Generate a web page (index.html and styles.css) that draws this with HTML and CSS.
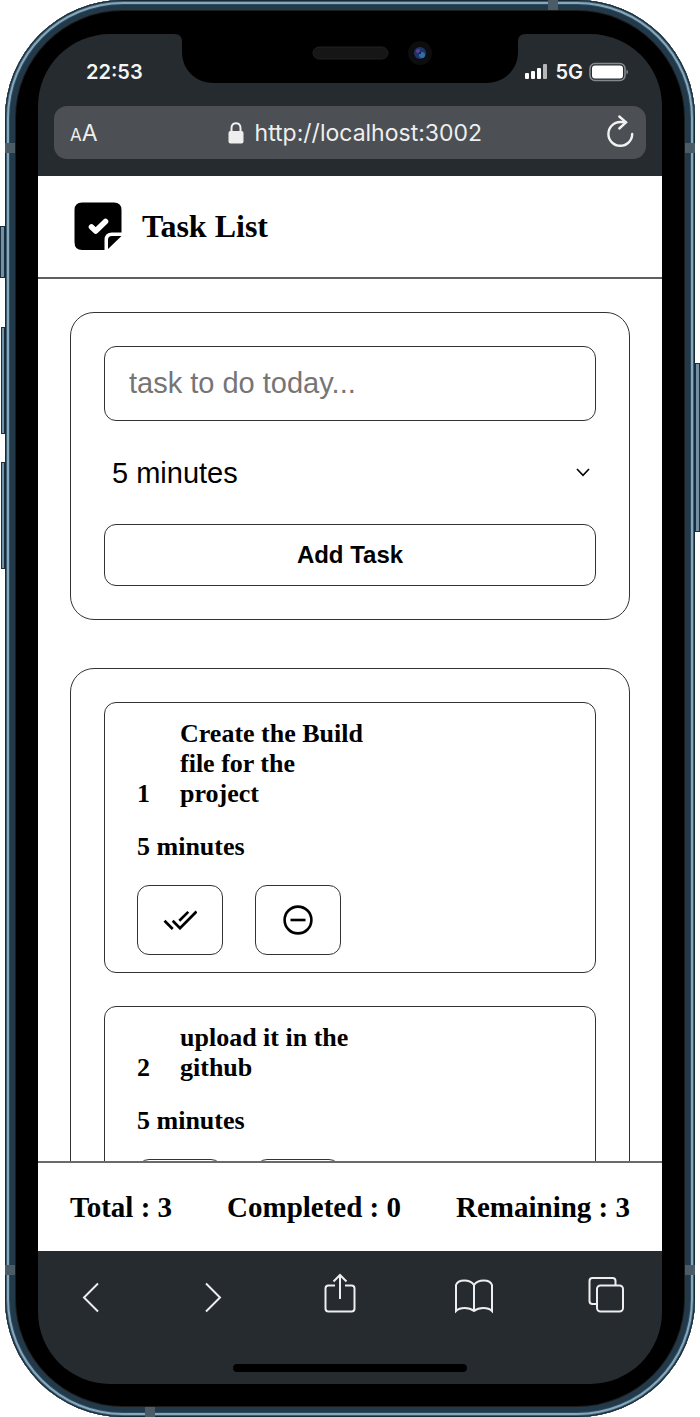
FILE: index.html
```html
<!DOCTYPE html>
<html lang="en">
<head>
<meta charset="utf-8">
<meta name="viewport" content="width=device-width, initial-scale=1">
<title>Task List</title>
<link rel="stylesheet" href="styles.css">
</head>
<body>
<div class="phone">
  <span class="key key-mute"></span>
  <span class="key key-up"></span>
  <span class="key key-down"></span>
  <span class="key key-power"></span>
  <span class="band band-top"></span>
  <span class="band band-bottom"></span>
  <span class="band band-side band-left-high"></span>
  <span class="band band-side band-left-low"></span>
  <span class="band band-side band-right-high"></span>
  <span class="band band-side band-right-low"></span>

  <div class="screen">
    <svg class="notch" viewBox="0 0 352 50" aria-hidden="true">
      <path d="M0 0C6 0 8 3 8 8V18C8 36 22 49 40 49H312C330 49 344 36 344 18V8C344 3 346 0 352 0Z" fill="#000"/>
      <rect x="139" y="13" width="75" height="12" rx="6" fill="#161616" stroke="#202020"/>
      <circle cx="246" cy="19" r="12" fill="#0d0d0f"/>
      <circle cx="246" cy="19" r="6" fill="#1d3566"/>
      <circle cx="244" cy="17" r="2" fill="#5a3f96"/>
      <circle cx="248" cy="21" r="3" fill="#2f6fa8"/>
      <circle cx="246" cy="19" r="1" fill="#0c1330"/>
    </svg>

    <div class="status-bar">
      <span class="status-text">22:53</span>
      <div class="status-right">
        <svg width="24" height="16" viewBox="0 0 24 16" aria-hidden="true">
          <rect x="0" y="9" width="4" height="6" rx="1" fill="#fff"/>
          <rect x="6" y="7" width="4" height="8" rx="1" fill="#fff"/>
          <rect x="12" y="4" width="4" height="11" rx="1" fill="#fff"/>
          <rect x="18" y="0" width="4" height="15" rx="1" fill="#b4b6b8"/>
        </svg>
        <span class="status-text">5G</span>
        <svg width="40" height="20" viewBox="0 0 40 20" aria-hidden="true">
          <rect x="1" y="1.5" width="35" height="17" rx="5" fill="none" stroke="#85898c" stroke-width="1.6"/>
          <rect x="3" y="3.5" width="31" height="13" rx="3" fill="#fff"/>
          <path d="M37.5 7.5C39.6 8.6 39.6 11.4 37.5 12.5Z" fill="#85898c"/>
        </svg>
      </div>
    </div>

    <div class="url-bar">
      <button class="bar-button text-size" type="button" aria-label="Text size"><span class="small-a">A</span>A</button>
      <div class="address">
        <svg width="16" height="22" viewBox="0 0 16 22" aria-hidden="true">
          <rect x="0.5" y="9" width="15" height="12.5" rx="2" fill="#eee"/>
          <path d="M3.5 10V6C3.5 -0.5 12.5 -0.5 12.5 6V10" fill="none" stroke="#eee" stroke-width="2"/>
        </svg>
        <span>http://localhost:3002</span>
      </div>
      <button class="bar-button" type="button" aria-label="Reload">
        <svg class="reload" width="28" height="34" viewBox="0 0 28 34" aria-hidden="true">
          <path d="M19.500 6.300C17 6 15.500 6 14.300 6A11.900 11.900 0 1 0 26.200 17.900" fill="none" stroke="#f2f2f2" stroke-width="2.400" stroke-linecap="round"/>
          <path d="M13.300 0.500L20 6.300L13.300 12.500" fill="none" stroke="#f2f2f2" stroke-width="2.400" stroke-linecap="round"/>
        </svg>
      </button>
    </div>

    <div class="app">
      <header class="app-header">
        <svg width="48" height="48" viewBox="0 0 48 48" aria-hidden="true">
          <path d="M8 0.500H40Q47.500 0.500 47.500 8V30.500H38Q30.500 30.500 30.500 38V48H8Q0.500 48 0.500 40V8Q0.500 0.500 8 0.500Z" fill="#000"/>
          <path d="M34 47V38Q34 34 38 34H47.500Z" fill="#000"/>
          <path d="M17.500 25L21.700 29L31.500 19.500" fill="none" stroke="#fff" stroke-width="5.600" stroke-linecap="round" stroke-linejoin="round"/>
        </svg>
        <h1 class="app-title">Task List</h1>
      </header>

      <main class="content">
        <form class="panel task-form">
          <input class="task-input" type="text" placeholder="task to do today..." aria-label="Task">
          <div class="select-wrap">
            <select class="time-select" aria-label="Duration">
              <option>5 minutes</option>
              <option>10 minutes</option>
              <option>15 minutes</option>
            </select>
            <svg class="chevron" width="14" height="9" viewBox="0 0 14 9" aria-hidden="true"><path d="M1 1L7 7.300L13 1" fill="none" stroke="#000" stroke-width="1.600"/></svg>
          </div>
          <button class="add-button" type="button">Add Task</button>
        </form>

        <section class="panel task-list">
          <article class="task">
            <div class="task-name"><span>1</span><span class="task-text">Create the Build file for the project</span></div>
            <div class="task-time">5 minutes</div>
            <div class="task-actions">
              <button class="action" type="button" aria-label="Complete task">
                <svg width="34" height="20" viewBox="0 0 34 20" aria-hidden="true"><path d="M1.500 10.800L9.700 19M9.700 10.800L17 18.200L33.500 1.500M16.300 10.800L25.300 1.900" fill="none" stroke="#000" stroke-width="2.700"/></svg>
              </button>
              <button class="action" type="button" aria-label="Remove task">
                <svg width="30" height="30" viewBox="0 0 30 30" aria-hidden="true"><circle cx="15" cy="15" r="13.400" fill="none" stroke="#000" stroke-width="2.600"/><path d="M7.500 15H22.500" stroke="#000" stroke-width="2.600"/></svg>
              </button>
            </div>
          </article>
          <article class="task">
            <div class="task-name"><span>2</span><span class="task-text">upload it in the github</span></div>
            <div class="task-time">5 minutes</div>
            <div class="task-actions">
              <button class="action" type="button" aria-label="Complete task"></button>
              <button class="action" type="button" aria-label="Remove task"></button>
            </div>
          </article>
        </section>
      </main>

      <footer class="totals">
        <span>Total : 3</span>
        <span>Completed : 0</span>
        <span>Remaining : 3</span>
      </footer>
    </div>

    <div class="browser-bar">
      <nav class="tools" aria-label="Browser">
        <button class="bar-button" type="button" aria-label="Back">
          <svg width="18" height="40" viewBox="0 0 18 40"><path d="M16 7.500L2 21.500L16 35.500" /></svg>
        </button>
        <button class="bar-button" type="button" aria-label="Forward">
          <svg width="18" height="40" viewBox="0 0 18 40"><path d="M2 7.500L16 21.500L2 35.500" /></svg>
        </button>
        <button class="bar-button" type="button" aria-label="Share">
          <svg width="32" height="40" viewBox="0 0 32 40"><path d="M11 9.500H4.500Q1.500 9.500 1.500 12.500V32.500Q1.500 35.500 4.500 35.500H27.500Q30.500 35.500 30.500 32.500V12.500Q30.500 9.500 27.500 9.500H21M16 23V-1M9.500 5.500L16 -1L22.500 5.500"/></svg>
        </button>
        <button class="bar-button" type="button" aria-label="Bookmarks">
          <svg width="40" height="40" viewBox="0 0 40 40"><path d="M20 35V9C16 3 4 3 2 9V35C6 31 15 31 20 35C25 31 34 31 38 35V9C36 3 24 3 20 9"/></svg>
        </button>
        <button class="bar-button" type="button" aria-label="Tabs">
          <svg width="36" height="40" viewBox="0 0 36 40"><path d="M9 28H4.500Q1.500 28 1.500 25V5Q1.500 2 4.500 2H24.500Q27.500 2 27.500 5V9"/><rect x="9" y="9.500" width="26" height="26" rx="3.500"/></svg>
        </button>
      </nav>
      <span class="home-indicator"></span>
    </div>
  </div>
</div>
</body>
</html>
```

FILE: styles.css
```css
* {
  box-sizing: border-box;
}

body {
  margin: 0;
  background: #fff;
  color: #000;
  font-family: "Liberation Serif", "Times New Roman", serif;
}

button,
input,
select {
  margin: 0;
  font-family: "Liberation Sans", Arial, sans-serif;
}

/* Device */
.phone {
  position: relative;
  height: 100vh;
  min-height: 900px;
  margin: 0 5px;
  padding: 34px 33px 33px;
  border-radius: 118px;
  background: #000;
  box-shadow:
    inset 0 0 0 1px #1a2a35,
    inset 0 0 0 2px #3e5b6f,
    inset 0 0 0 4px #86a8bd,
    inset 0 0 0 5px #2f4b5f,
    inset 0 0 0 10px #22394a,
    inset 0 0 0 11px #1e1c1b;
}

.key {
  position: absolute;
  width: 5px;
  border: 1px solid #1c2f3d;
  background: #6f90a5;
}

.key-mute { left: -5px; top: 226px; height: 52px; }
.key-up { left: -4px; top: 327px; height: 107px; width: 4px; }
.key-down { left: -4px; top: 462px; height: 107px; width: 4px; }
.key-power { right: -5px; top: 363px; height: 169px; }

.band {
  position: absolute;
  width: 10px;
  height: 10px;
  background: #4b5c67;
}

.band-top { top: 0; right: 137px; }
.band-bottom { bottom: 0; left: 140px; }
.band-left-high { left: 0; top: 143px; }
.band-left-low { left: 0; bottom: 142px; }
.band-right-high { right: 0; top: 143px; }
.band-right-low { right: 0; bottom: 142px; }

.screen {
  position: relative;
  display: flex;
  flex-direction: column;
  height: 100%;
  border-radius: 72px;
  overflow: hidden;
  background: #262b2f;
  font-weight: 700;
}

.notch {
  position: absolute;
  top: 0;
  left: 50%;
  width: 352px;
  height: 50px;
  transform: translateX(-50%);
}

/* Browser chrome */
.status-bar {
  display: flex;
  align-items: center;
  justify-content: space-between;
  height: 72px;
  padding: 4px 33px 0 48px;
  color: #f5f5f5;
}

.status-text {
  font: 600 20px/24px Inter, sans-serif;
}

.status-right {
  display: flex;
  align-items: center;
  gap: 6px;
}

.url-bar {
  display: flex;
  align-items: center;
  justify-content: space-between;
  height: 53px;
  margin: 0 16px 17px;
  padding: 0 12px 0 16px;
  border-radius: 13px;
  background: #4c4f54;
  color: #eee;
}

.address {
  display: flex;
  align-items: center;
  gap: 11px;
  padding-left: 6px;
  font: 400 23px/28px Inter, sans-serif;
}

.bar-button {
  display: flex;
  align-items: center;
  padding: 0;
  border: 0;
  background: none;
  color: #eee;
}

.text-size {
  align-items: baseline;
  padding-top: 3px;
  font: 400 23px/28px Inter, sans-serif;
}

.small-a {
  font-size: 17px;
}

.reload {
  overflow: visible;
}

/* App */
.app {
  display: flex;
  flex: 1;
  flex-direction: column;
  min-height: 0;
  background: #fff;
}

.app-header {
  display: flex;
  align-items: center;
  gap: 20px;
  padding: 26px 36px 27px;
  border-bottom: 2px solid #5f5f5f;
}

.app-title {
  margin: 0;
  font-size: 32px;
  line-height: 48px;
}

.content {
  display: flex;
  flex: 1;
  flex-direction: column;
  gap: 48px;
  min-height: 0;
  padding: 33px 32px 0;
  overflow: hidden;
}

.panel {
  display: flex;
  flex: none;
  flex-direction: column;
  gap: 32px;
  padding: 33px;
  border: 1px solid #333;
  border-radius: 24px;
}

.task-input {
  width: 100%;
  height: 75px;
  padding: 0 24px;
  border: 1px solid #333;
  border-radius: 12px;
  background: #fff;
  font-size: 29px;
}

.task-input::placeholder {
  color: #757575;
}

.select-wrap {
  position: relative;
}

.time-select {
  display: block;
  width: 100%;
  height: 39px;
  padding: 0 8px;
  border: 0;
  appearance: none;
  background: none;
  color: #000;
  font-size: 29px;
}

.chevron {
  position: absolute;
  top: 15px;
  right: 6px;
  pointer-events: none;
}

.add-button {
  height: 62px;
  border: 1px solid #333;
  border-radius: 12px;
  background: #fff;
  color: #000;
  font-size: 24px;
  font-weight: 700;
}

.task-list {
  gap: 33px;
}

.task {
  padding: 16px 32px 17px;
  border: 1px solid #333;
  border-radius: 12px;
  font-size: 26px;
  line-height: 30px;
}

.task-name {
  display: flex;
  align-items: flex-end;
  gap: 30px;
}

.task-text {
  max-width: 188px;
}

.task-time {
  margin: 23px 0;
}

.task-actions {
  display: flex;
  gap: 32px;
}

.action {
  display: flex;
  align-items: center;
  justify-content: center;
  width: 86px;
  height: 70px;
  padding: 0;
  border: 1px solid #333;
  border-radius: 12px;
  background: #fff;
}

.totals {
  display: flex;
  justify-content: space-between;
  padding: 26px 32px;
  border-top: 2px solid #6a6a6a;
  font-size: 29px;
  line-height: 36px;
}

.browser-bar {
  display: flex;
  flex-direction: column;
  align-items: center;
  height: 133px;
}

.tools {
  display: grid;
  grid-template-columns: 106fr 138fr 116fr 152fr 112fr;
  justify-items: center;
  width: 100%;
  padding: 25px 0 48px;
}

.tools svg {
  overflow: visible;
  fill: none;
  stroke: #eee;
  stroke-width: 2;
}

.home-indicator {
  width: 234px;
  height: 8px;
  border-radius: 4px;
  background: #000;
}
```
